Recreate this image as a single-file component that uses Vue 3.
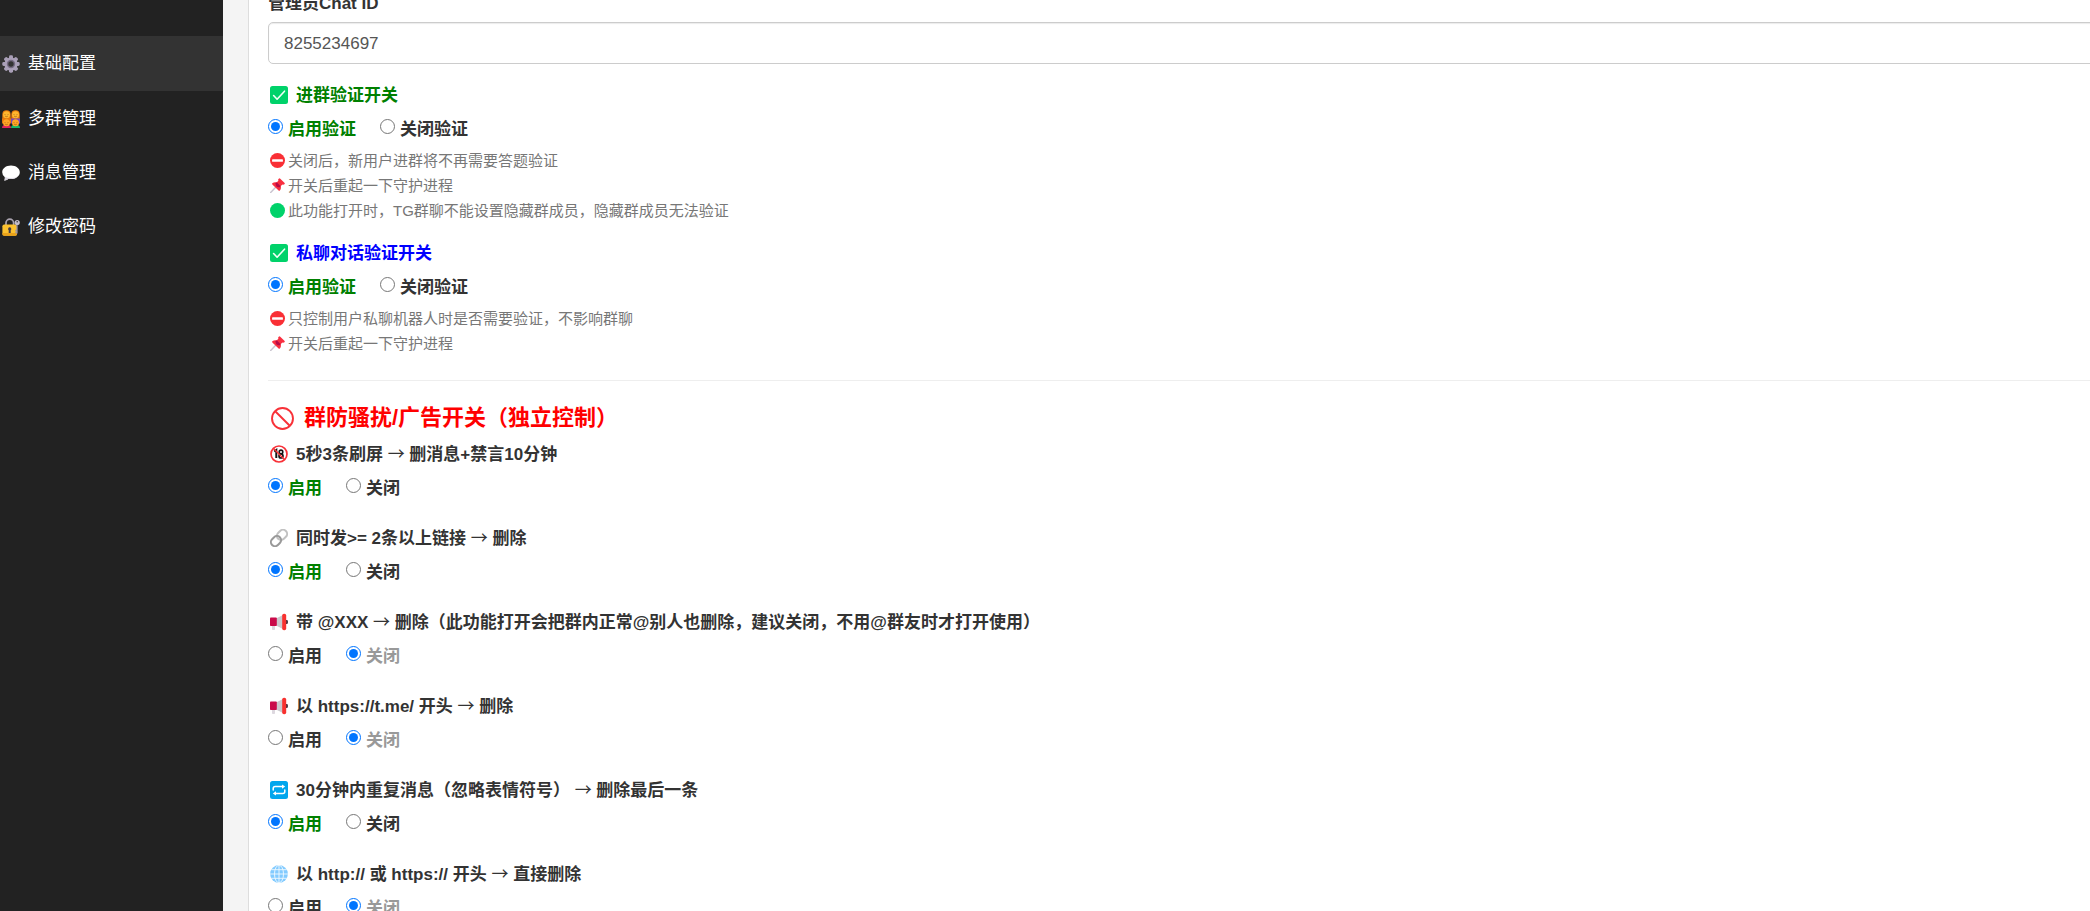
<script setup>
import { ref, reactive } from 'vue'

const menu = [
  { icon: 'gear', text: '基础配置', active: true },
  { icon: 'people', text: '多群管理' },
  { icon: 'bubble', text: '消息管理' },
  { icon: 'lock', text: '修改密码' },
]

const chatId = ref('8255234697')

const verify = reactive([
  {
    id: 'group',
    title: '进群验证开关',
    value: 'on',
    notes: [
      { icon: 'stop', text: '关闭后，新用户进群将不再需要答题验证' },
      { icon: 'pin', text: '开关后重起一下守护进程' },
      { icon: 'dot', text: '此功能打开时，TG群聊不能设置隐藏群成员，隐藏群成员无法验证' },
    ],
  },
  {
    id: 'private',
    title: '私聊对话验证开关',
    value: 'on',
    notes: [
      { icon: 'stop', text: '只控制用户私聊机器人时是否需要验证，不影响群聊' },
      { icon: 'pin', text: '开关后重起一下守护进程' },
    ],
  },
])

const rules = reactive([
  { id: 'flood', icon: 'adult', from: '5秒3条刷屏', to: '删消息+禁言10分钟', value: 'on' },
  { id: 'links', icon: 'link', from: '同时发>= 2条以上链接', to: '删除', value: 'on' },
  { id: 'mention', icon: 'horn', from: '带 @XXX', to: '删除（此功能打开会把群内正常@别人也删除，建议关闭，不用@群友时才打开使用）', value: 'off' },
  { id: 'tme', icon: 'horn', from: '以 https://t.me/ 开头', to: '删除', value: 'off' },
  { id: 'repeat', icon: 'repeat', from: '30分钟内重复消息（忽略表情符号）', to: '删除最后一条', value: 'on' },
  { id: 'http', icon: 'globe', from: '以 http:// 或 https:// 开头', to: '直接删除', value: 'off' },
])
</script>

<template>
  <svg class="sprite" aria-hidden="true">
    <symbol id="gear" viewBox="0 0 18 18">
      <g fill="#aaa0b8">
        <rect v-for="a in [0, 45, 90, 135]" :key="a" x="7" y="0.3" width="4" height="17.4" rx="1.4" :transform="`rotate(${a} 9 9)`" />
        <circle cx="9" cy="9" r="6.6" />
      </g>
      <circle cx="9" cy="9" r="4.200" fill="#756b82" />
      <circle cx="9" cy="9" r="2.700" fill="#333" />
    </symbol>
    <symbol id="people" viewBox="0 0 18 18">
      <path d="M.3 9V4.500Q.3.200 4.500.200T8.700 4.500V9zM9.300 9V4.500q0-4.300 4.200-4.300t4.200 4.300V9z" fill="#e8790c" />
      <path d="M0 8.500h9v5H0z" fill="#e8790c" />
      <path d="M9 8.500h9v5H9z" fill="#7748b8" />
      <circle cx="4.5" cy="4.7" r="3.500" fill="#ffb62e" /><circle cx="13.5" cy="4.7" r="3.500" fill="#ffb62e" />
      <path d="M0 18q0-3.500 4.5-3.500T9 18z" fill="#e0245e" /><path d="M9 18q0-3.500 4.500-3.500T18 18z" fill="#18b86a" />
      <circle cx="4.5" cy="12.7" r="3.500" fill="#ffa726" /><circle cx="13.5" cy="12.7" r="3.500" fill="#ffa726" />
      <path d="M3 4.2v.8M6 4.2v.8M12 4.2v.8M15 4.2v.8M3.2 6.2q1.3 1 2.6 0M12.2 6.2q1.3 1 2.6 0M3 12v.8M6 12v.8M12 12v.8M15 12v.8M3.2 14.2q1.3 1 2.6 0M12.2 14.2q1.3 1 2.6 0" fill="none" stroke="#8a4a12" stroke-width=".6" />
    </symbol>
    <symbol id="bubble" viewBox="0 0 18 18">
      <path d="M9 1.5c5 0 8.8 2.9 8.8 6.7S14 15 9 15q-1.3 0-2.4-.2Q4.700 16.700 2.200 16.500 3 15.500 2.900 13.200.2 11.200.2 8.200C.2 4.400 4 1.500 9 1.500z" fill="#fff" />
      <path d="M2.500 12.700q2.500 1.300 6.500 1.300t6.500-1.500Q13 15 9 15q-1.300 0-2.400-.2-1.900 1.900-4.400 1.700.8-1 .7-3.300z" fill="#d9d5df" />
    </symbol>
    <symbol id="lock" viewBox="0 0 18 18">
      <path d="M4 8V5a3.800 3.800 0 0 1 7.600 0v3" fill="none" stroke="#a9a2ae" stroke-width="1.700" />
      <rect x=".4" y="6.500" width="14.600" height="11.200" rx="1.800" fill="#fcc22f" />
      <path d="M.4 15v1q0 1.700 1.800 1.700h11q1.800 0 1.800-1.700v-1z" fill="#eaa21a" />
      <path d="M7.700 9.300a1.700 1.700 0 0 1 1 3V15h-2v-2.700a1.700 1.700 0 0 1 1-3z" fill="#433b45" />
      <path d="M15 6v9.500M15 12.500h-1.700M15 14.500h-1.700" stroke="#9a93a2" stroke-width="1.300" />
      <circle cx="15.200" cy="4.500" r="2.600" fill="#c3bdc9" /><circle cx="15.200" cy="3.800" r=".8" fill="#333" />
    </symbol>
    <symbol id="check" viewBox="0 0 18 18">
      <rect width="18" height="18" rx="2.500" fill="#00d26a" />
      <path d="M3.600 9.500l3.500 3.700 7.400-8" fill="none" stroke="#f4fff8" stroke-width="1.600" stroke-linecap="round" stroke-linejoin="round" />
    </symbol>
    <symbol id="stop" viewBox="0 0 18 18">
      <circle cx="9" cy="9" r="9" fill="#f92f35" /><rect x="2.500" y="7.400" width="13" height="3.200" rx=".8" fill="#fff" />
    </symbol>
    <symbol id="pin" viewBox="0 0 18 18">
      <path d="M.8 17.300l6-6.300" stroke="#c9c4cf" stroke-width="1.700" stroke-linecap="round" />
      <path d="M10.500.8q.9-.9 1.800 0l5 5q.9.900 0 1.800-1.300 1-2.500.2l-2 2q1 3.200-1 5.300-.8.600-1.500 0L2.800 7.700q-.6-.7 0-1.500 2.200-1.800 5.300-1l2-2Q9.300 2 10.500.8z" fill="#f92f40" />
      <path d="M8.100 5.200l4.700 4.600-1.200 1.200q-2.500.5-3.800-.8-1.500-1.600-.9-3.800z" fill="#b60b47" />
    </symbol>
    <symbol id="dot" viewBox="0 0 18 18"><circle cx="9" cy="9" r="9" fill="#00d26a" /></symbol>
    <symbol id="ban" viewBox="0 0 18 18">
      <circle cx="9" cy="9" r="8.200" fill="none" stroke="#f83138" stroke-width="1.500" /><path d="M3.300 3.300l11.400 11.400" stroke="#f83138" stroke-width="1.500" />
    </symbol>
    <symbol id="adult" viewBox="0 0 18 18">
      <circle cx="9" cy="9" r="8" fill="#fff" stroke="#f83138" stroke-width="1.700" />
      <path d="M4.200 6.500L6.300 5v8" fill="none" stroke="#151515" stroke-width="2" />
      <circle cx="11" cy="6.900" r="1.800" fill="none" stroke="#151515" stroke-width="1.600" /><circle cx="11" cy="11" r="2" fill="none" stroke="#151515" stroke-width="1.700" />
      <path d="M3.300 3.300l11.400 11.400" stroke="#f83138" stroke-width="1.400" />
    </symbol>
    <symbol id="link" viewBox="0 0 18 18">
      <g fill="none" stroke-width="2">
        <rect x="6.500" y="1.800" width="11" height="8.200" rx="4.100" transform="rotate(-45 12 5.900)" stroke="#c1c1c1" />
        <rect x=".500" y="8" width="11" height="8.200" rx="4.100" transform="rotate(-45 6 12.100)" stroke="#999" />
      </g>
    </symbol>
    <symbol id="horn" viewBox="0 0 18 18">
      <path d="M2 11h3v5.500q-1.500 1-3 0z" fill="#ddd8df" />
      <path d="M6 5.500L13 2v14l-7-3.500z" fill="#cbc8cd" />
      <rect x="0" y="4.500" width="6.800" height="8.500" rx=".8" fill="#ca0b4a" />
      <path d="M15 7h2q1 0 1 2t-1 2h-2z" fill="#40333f" />
      <rect x="12.200" y="0.800" width="4" height="16.400" rx="1.800" fill="#f8312f" />
    </symbol>
    <symbol id="repeat" viewBox="0 0 18 18">
      <rect width="18" height="18" rx="2.500" fill="#00a6ed" />
      <path d="M3.200 9V7.600q0-2 2-2h7.500M14.800 9v1.400q0 2-2 2H5.300" fill="none" stroke="#fff" stroke-width="1.500" stroke-linecap="round" />
      <path d="M12 3.400l3.200 2.200-3.200 2.200zM6 10.200l-3.200 2.200L6 14.600z" fill="#fff" />
    </symbol>
    <symbol id="globe" viewBox="0 0 18 18">
      <circle cx="9" cy="9" r="8.900" fill="#83cbff" />
      <g fill="none" stroke="#f0f9ff" stroke-width=".9">
        <path d="M9 0v18M0 9h18M1.500 4.700h15M1.500 13.300h15" /><ellipse cx="9" cy="9" rx="4.500" ry="8.800" />
      </g>
    </symbol>
  </svg>

  <div class="app">
    <nav class="sidebar">
      <a v-for="m in menu" :key="m.icon" href="#" class="menu-item" :class="{ active: m.active }">
        <svg class="icon"><use :href="'#' + m.icon" /></svg>{{ m.text }}
      </a>
    </nav>

    <main class="content">
      <form class="panel" @submit.prevent>
        <label class="title" for="chat-id">管理员Chat ID</label>
        <input id="chat-id" v-model="chatId" class="text-input" type="text" />

        <section v-for="v in verify" :key="v.id" class="verify">
          <div class="title" :class="v.id"><svg class="icon"><use href="#check" /></svg>{{ v.title }}</div>
          <div class="options">
            <label class="option enable"><input v-model="v.value" type="radio" :name="v.id" value="on" /><span>启用验证</span></label>
            <label class="option"><input v-model="v.value" type="radio" :name="v.id" value="off" /><span>关闭验证</span></label>
          </div>
          <div class="notes">
            <p v-for="n in v.notes" :key="n.icon" class="note"><svg class="icon small"><use :href="'#' + n.icon" /></svg>{{ n.text }}</p>
          </div>
        </section>

        <hr />
        <h3><svg class="icon large"><use href="#ban" /></svg>群防骚扰/广告开关（独立控制）</h3>

        <section v-for="r in rules" :key="r.id" class="rule">
          <div class="title">
            <svg class="icon"><use :href="'#' + r.icon" /></svg>
            <span>{{ r.from }} <span class="arrow">→</span> {{ r.to }}</span>
          </div>
          <div class="options">
            <label class="option enable"><input v-model="r.value" type="radio" :name="r.id" value="on" /><span>启用</span></label>
            <label class="option disable"><input v-model="r.value" type="radio" :name="r.id" value="off" /><span>关闭</span></label>
          </div>
        </section>
      </form>
    </main>
  </div>
</template>

<style>
body {
  margin: 0;
  overflow: hidden;
}
</style>

<style scoped>
.sprite {
  position: absolute;
  width: 0;
  height: 0;
}
.app {
  display: flex;
  height: 100vh;
  overflow: hidden;
  background: #f4f4f4;
  color: #333;
  font: 17px/24px "Liberation Sans", "Noto Sans CJK SC", sans-serif;
}
.sidebar {
  box-sizing: border-box;
  flex: 0 0 223px;
  padding-top: 36px;
  background: #222;
}
.menu-item {
  display: flex;
  align-items: center;
  gap: 8px;
  height: 54px;
  padding: 1px 0 0 2px;
  box-sizing: border-box;
  color: #fff;
  text-decoration: none;
}
.menu-item.active {
  height: 55px;
  background: #333;
}
.icon {
  flex: none;
  width: 18px;
  height: 18px;
}
.icon.small {
  width: 15px;
  height: 15px;
}
.icon.large {
  width: 23px;
  height: 23px;
}
.content {
  flex: 1;
  min-width: 0;
  padding-left: 25px;
}
.panel {
  margin: -40px -40px 0 0;
  padding: 32px 19px 40px;
  border-left: 1px solid #ddd;
  background: #fff;
}
.title {
  display: flex;
  align-items: center;
  gap: 8px;
  font-weight: bold;
}
.title .icon {
  margin: 0 0 2px 2px;
}
.title.group {
  color: green;
}
.title.private {
  color: blue;
}
.text-input {
  box-sizing: border-box;
  width: 100%;
  height: 42px;
  margin: 6px 0 1px;
  padding: 1px 15px 0;
  border: 1px solid #ccc;
  border-radius: 5px;
  box-shadow: inset 0 1px 1px rgba(0, 0, 0, 0.08);
  background: #fff;
  color: #555;
  font: inherit;
  display: block;
}
.verify {
  padding-top: 19px;
}
.options {
  display: flex;
  gap: 24px;
  margin-top: 10px;
  font-weight: bold;
}
.option {
  display: flex;
  align-items: flex-start;
}
.option input {
  width: 15px;
  height: 15px;
  margin: 1px 5px 0 0;
  accent-color: #0075ff;
}
.enable input:checked + span {
  color: green;
}
.disable input:checked + span {
  color: #999;
}
.notes {
  margin-top: 6px;
}
.note {
  display: flex;
  align-items: center;
  gap: 3px;
  margin: 0;
  padding-left: 2px;
  color: #777;
  font-size: 15px;
  line-height: 25px;
}
hr {
  margin: 24px 0 22px;
  border: 0;
  border-top: 1px solid #eee;
}
h3 {
  display: flex;
  align-items: center;
  gap: 10px;
  margin: 0 0 10px;
  padding-left: 3px;
  color: red;
  font-size: 22px;
  line-height: 30px;
}
.rule {
  margin-bottom: 26px;
}
.arrow {
  font-family: "Noto Sans CJK SC", sans-serif;
  font-weight: normal;
  line-height: 1;
}
</style>
